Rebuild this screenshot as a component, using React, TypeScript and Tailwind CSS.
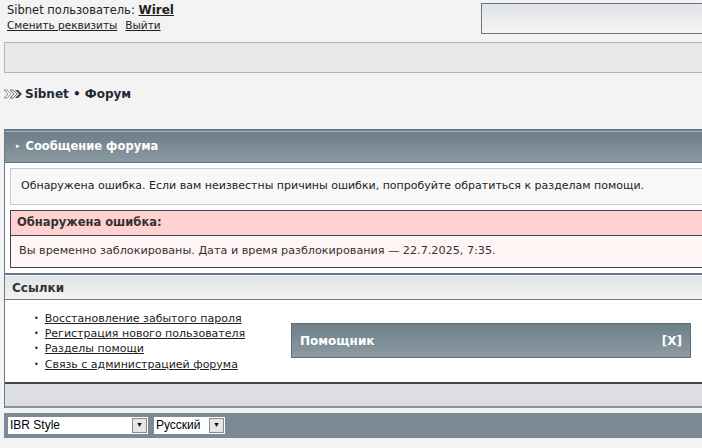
import React from "react";

const links = [
  "Восстановление забытого пароля",
  "Регистрация нового пользователя",
  "Разделы помощи",
  "Связь с администрацией форума",
];

function Crumbs() {
  return (
    <svg width="19" height="10" viewBox="0 0 19 10">
      <path d="M1 1h3l4 4-4 4H1l4-4z" fill="none" stroke="#8a949c" strokeWidth="1" />
      <path d="M7 1h3l4 4-4 4H7l4-4z" fill="none" stroke="#6a747c" strokeWidth="1" />
      <path d="M12 1h3l4 4-4 4h-3l4-4z" fill="#3d4a56" />
    </svg>
  );
}

export default function App() {
  return (
    <div
      className="min-h-screen overflow-hidden bg-[#f3f3f3] text-[11px] text-[#222]"
      style={{ fontFamily: '"DejaVu Sans", Verdana, sans-serif' }}
    >
      {/* page is wider than the window, right edges fall outside */}
      <div className="w-[724px]">
        {/* top user line + search */}
        <div className="flex justify-between">
          <div className="pl-[7px] pt-[3px]">
            <div className="text-[11.5px] leading-[15px]">
              Sibnet пользователь:{" "}
              <a className="font-bold text-[12px] text-[#222] underline">Wirel</a>
            </div>
            <div className="flex gap-[8px] text-[10.5px] leading-[14px]">
              <a className="underline">Сменить реквизиты</a>
              <a className="underline">Выйти</a>
            </div>
          </div>
          <div className="mt-[3px] h-[31px] w-[243px] border border-[#677885] bg-gradient-to-b from-[#e1e2e7] to-[#f4f4f4]" />
        </div>

        {/* gray bar */}
        <div className="ml-[4px] mt-[8px] h-[31px] border-y border-l border-[#b5b5b5] bg-[#e7e8ea]" />

        {/* breadcrumb */}
        <div className="flex h-[56px] items-center gap-[3px] pl-[3px] pb-[14px]">
          <Crumbs />
          <span className="text-[12px] font-bold text-[#1e2a36]">Sibnet • Форум</span>
        </div>

        {/* forum message panel */}
        <div className="ml-[4px] border-l border-t-2 border-[#68798a] bg-white">
          <div className="flex h-[31px] items-center gap-[6px] border-t border-[#a6b1b9] bg-gradient-to-b from-[#6d7e89] to-[#8b99a1] pl-[11px] pb-[1px]">
            <span className="text-[7px] leading-none text-white">▸</span>
            <span className="text-[11.5px] font-bold text-white">Сообщение форума</span>
          </div>
          <div className="border-t border-[#5f6f7b] px-[5px] pt-[5px] pb-[5px]">
            <div className="flex h-[37px] items-center border border-[#c9c9c9] bg-[#f8f8f8] pl-[10px] text-[#222]">
              Обнаружена ошибка. Если вам неизвестны причины ошибки, попробуйте обратиться к разделам помощи.
            </div>
            <div className="mt-[5px] border border-[#3b4550]">
              <div className="flex h-[25px] items-center border-b border-[#3b4550] bg-[#ffd1d1] pl-[6px] text-[11.5px] font-bold text-[#333]">
                Обнаружена ошибка:
              </div>
              <div className="flex h-[31px] items-center bg-[#fff5f4] pl-[8px] text-[11.2px] text-[#333]">
                Вы временно заблокированы. Дата и время разблокирования — 22.7.2025, 7:35.
              </div>
            </div>
          </div>
        </div>

        {/* links panel */}
        <div className="ml-[4px] border-l border-t-2 border-[#68798a] bg-white">
          <div className="flex h-[25px] items-center border-t border-[#f6f6f6] border-b border-b-[#6c7b86] bg-gradient-to-b from-[#e2e3e7] to-[#f3f3f3] pl-[7px] text-[12px] font-bold text-[#333]">
            Ссылки
          </div>
          <div className="flex items-start">
            <ul className="w-[286px] pt-[11px] pb-[10px] pl-[29px] leading-[15.2px]">
              {links.map((l) => (
                <li key={l} className="flex items-center gap-[6px]">
                  <span className="text-[8px]">•</span>
                  <a className="text-[#222] underline">{l}</a>
                </li>
              ))}
            </ul>
            <div className="mt-[23px] flex h-[35px] w-[400px] items-center justify-between border border-[#5e6e7a] bg-gradient-to-b from-[#6f808a] to-[#8c9aa2] px-[8px] text-[12px] font-bold text-white">
              <span>Помощник</span>
              <span>[X]</span>
            </div>
          </div>
          <div className="h-[26px] border-y-2 border-t-[#3e4852] border-b-[#8a9197] bg-[#dddee1]" />
        </div>

        {/* footer */}
        <div
          className="ml-[4px] mt-[5px] flex h-[25px] items-center gap-[6px] bg-[#7b8a96] pl-[4px]"
          style={{ fontFamily: '"Liberation Sans", Arial, sans-serif' }}
        >
          <div className="flex h-[17px] w-[140px] items-center justify-between bg-white pl-[2px] text-[12px] text-black">
            <span>IBR Style</span>
            <span className="mr-[1px] flex h-[15px] w-[15px] items-center justify-center border border-[#888] bg-[#e6e6e6] text-[7px]">▼</span>
          </div>
          <div className="flex h-[17px] w-[71px] items-center justify-between bg-white pl-[2px] text-[12px] text-black">
            <span>Русский</span>
            <span className="mr-[1px] flex h-[15px] w-[15px] items-center justify-center border border-[#888] bg-[#e6e6e6] text-[7px]">▼</span>
          </div>
        </div>
      </div>
    </div>
  );
}
